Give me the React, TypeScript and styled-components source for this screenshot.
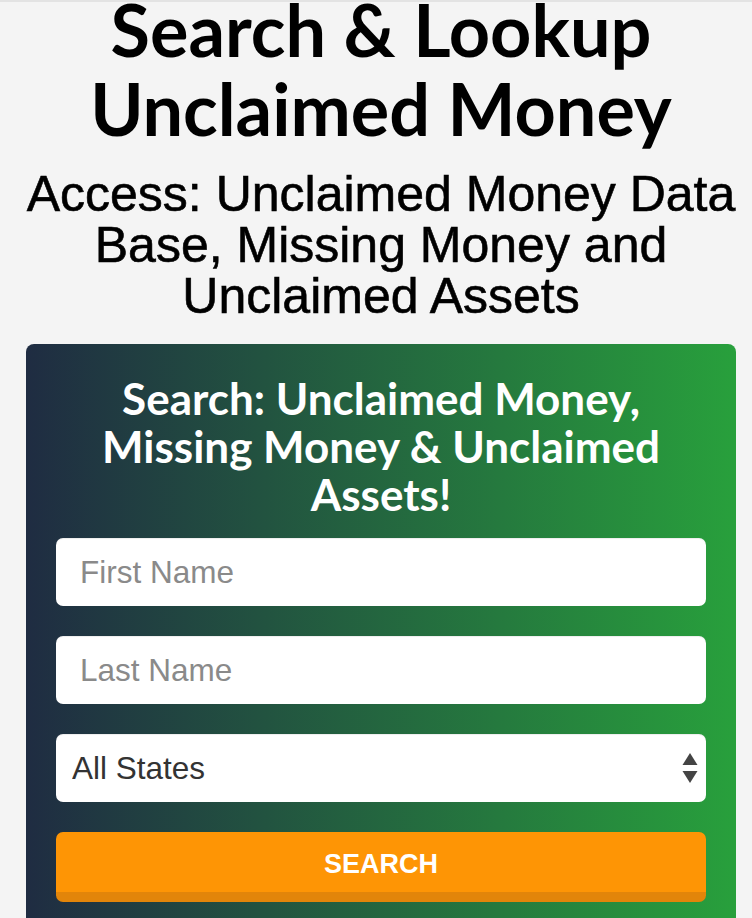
import { createGlobalStyle, styled } from 'styled-components'

const GlobalStyle = createGlobalStyle`
  * {
    box-sizing: border-box;
  }
  body {
    margin: 0;
    background: #f4f4f4;
    overflow: hidden;
  }
`

export default function App() {
  return (
    <Page>
      <GlobalStyle />
      <Title>Search &amp; Lookup Unclaimed Money</Title>
      <Subtitle>
        Access: Unclaimed Money Data Base, Missing Money and Unclaimed Assets
      </Subtitle>
      <Panel>
        <PanelTitle>
          Search: Unclaimed Money, Missing Money &amp; Unclaimed Assets!
        </PanelTitle>
        <Form onSubmit={e => e.preventDefault()}>
          <Input type="text" placeholder="First Name" />
          <Input type="text" placeholder="Last Name" />
          <SelectWrap>
            <Select defaultValue="">
              <option value="">All States</option>
              <option value="AL">Alabama</option>
              <option value="AK">Alaska</option>
              <option value="AZ">Arizona</option>
              <option value="CA">California</option>
            </Select>
            <Arrows width="16" height="30" viewBox="0 0 16 30">
              <path d="M8 0 L15.5 12 L0.5 12 Z" fill="#444" />
              <path d="M0.5 18 L15.5 18 L8 30 Z" fill="#444" />
            </Arrows>
          </SelectWrap>
          <Button type="submit">Search</Button>
        </Form>
      </Panel>
    </Page>
  )
}

const Page = styled.div`
  border-top: 2px solid #e3e3e3;
  padding: 0 16px 0 26px;
`

const Title = styled.h1`
  margin: -12px 0 0;
  font-family: Lato, 'Liberation Sans', sans-serif;
  font-size: 72px;
  font-weight: 700;
  line-height: 1.1;
  text-align: center;
  color: #000;
`

const Subtitle = styled.h2`
  margin: 21px -4px 22px;
  font-family: 'Liberation Sans', Arial, sans-serif;
  font-size: 50px;
  font-weight: 400;
  line-height: 51px;
  text-align: center;
  color: #000;
  -webkit-text-stroke: 0.6px #000;
`

const Panel = styled.div`
  border-radius: 8px;
  padding: 30px 30px 30px;
  background: linear-gradient(to right, #1f2c42 0%, #28a03c 100%);
`

const PanelTitle = styled.h3`
  margin: 0 0 20px;
  font-family: Lato, 'Liberation Sans', sans-serif;
  font-size: 44px;
  font-weight: 700;
  line-height: 48px;
  text-align: center;
  color: #fff;
`

const Form = styled.form`
  display: flex;
  flex-direction: column;
  gap: 30px;
`

const Input = styled.input`
  display: block;
  width: 100%;
  height: 68px;
  padding: 0 24px;
  border: none;
  border-radius: 7px;
  background: #fff;
  box-shadow: inset 0 1px 1px rgba(0, 0, 0, 0.075);
  font-family: 'Liberation Sans', Arial, sans-serif;
  font-size: 31.5px;
  color: #333;
  outline: none;
  &::placeholder {
    color: #8a8a8a;
  }
`

const SelectWrap = styled.div`
  position: relative;
`

const Select = styled.select`
  display: block;
  width: 100%;
  height: 68px;
  padding: 0 50px 0 16px;
  border: none;
  border-radius: 7px;
  background: #fff;
  box-shadow: inset 0 1px 1px rgba(0, 0, 0, 0.075);
  appearance: none;
  font-family: 'Liberation Sans', Arial, sans-serif;
  font-size: 31.5px;
  color: #333;
  outline: none;
`

const Arrows = styled.svg`
  position: absolute;
  right: 8px;
  top: 19px;
  pointer-events: none;
`

const Button = styled.button`
  display: flex;
  align-items: center;
  justify-content: center;
  width: 100%;
  height: 70px;
  padding: 4px 0 0;
  border: none;
  border-bottom: 10px solid #e2850a;
  border-radius: 7px;
  background: #fe9505;
  font-family: 'Liberation Sans', Arial, sans-serif;
  font-size: 27px;
  font-weight: 700;
  text-transform: uppercase;
  color: #fff;
  cursor: pointer;
`
